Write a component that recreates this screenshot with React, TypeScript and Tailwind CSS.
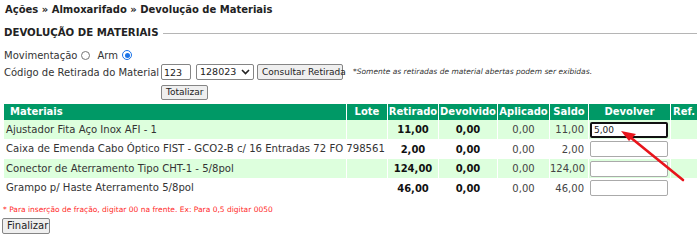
import type { FC } from "react";

type Row = {
  material: string;
  retirado: string;
  saldo: string;
  devolver: string;
  focused?: boolean;
};

const rows: Row[] = [
  { material: "Ajustador Fita Aço Inox AFI - 1", retirado: "11,00", saldo: "11,00", devolver: "5,00", focused: true },
  { material: "Caixa de Emenda Cabo Óptico FIST - GCO2-B c/ 16 Entradas 72 FO 798561", retirado: "2,00", saldo: "2,00", devolver: "" },
  { material: "Conector de Aterramento Tipo CHT-1 - 5/8pol", retirado: "124,00", saldo: "124,00", devolver: "" },
  { material: "Grampo p/ Haste Aterramento 5/8pol", retirado: "46,00", saldo: "46,00", devolver: "" },
];

const btn =
  "h-[15px] px-[4px] text-[9px] leading-none text-[#222] bg-[#efefef] border border-[#858585] rounded-[2px] whitespace-nowrap";

const Radio: FC<{ checked?: boolean }> = ({ checked }) =>
  checked ? (
    <span className="inline-flex w-[10px] h-[10px] rounded-full border-[1.5px] border-[#1a73e8] items-center justify-center">
      <span className="w-[5px] h-[5px] rounded-full bg-[#1a73e8]" />
    </span>
  ) : (
    <span className="inline-block w-[9px] h-[9px] rounded-full border border-[#767676] bg-white" />
  );

export default function App() {
  return (
    <div className="relative w-[700px] h-[243px] bg-white text-[#333] font-['DejaVu_Sans','Liberation_Sans',sans-serif] text-[10px] overflow-hidden">
      <div className="pl-[5px] h-[20px] leading-[20px] text-[10px] font-bold text-[#222] whitespace-nowrap">
        Ações » Almoxarifado » Devolução de Materiais
      </div>

      <div className="flex items-center pl-[4px] pr-[3px] mt-[6px] h-[14px]">
        <span className="text-[10.2px] font-bold text-[#222] whitespace-nowrap">DEVOLUÇÃO DE MATERIAIS</span>
        <span className="flex-1 ml-[4px] h-px bg-[#b5b5b5]" />
      </div>

      <div className="flex items-center pl-[4px] mt-[7px] h-[16px]">
        <span>Movimentação</span>
        <span className="ml-[4px] flex"><Radio /></span>
        <span className="ml-[7px]">Arm</span>
        <span className="ml-[4px] flex"><Radio checked /></span>
      </div>

      <div className="flex items-center pl-[4px] mt-[1px] h-[16px]">
        <span className="w-[157px] whitespace-nowrap">Código de Retirada do Material</span>
        <input
          defaultValue="123"
          className="w-[30px] h-[16px] px-[2px] text-[9.5px] text-[#222] border border-[#858585] rounded-[2px] outline-none"
        />
        <span className="ml-[5px] w-[58px] h-[16px] px-[3px] flex items-center justify-between border border-[#858585] rounded-[2px] text-[9.5px] text-[#222]">
          128023
          <svg width="9" height="6" viewBox="0 0 9 6">
            <path d="M1 1l3.5 3.5L8 1" stroke="#222" strokeWidth="1.6" fill="none" />
          </svg>
        </span>
        <button className={`${btn} ml-[3px] w-[86px] h-[16px]`}>Consultar Retirada</button>
        <span className="ml-[10px] text-[7.5px] italic text-[#333] whitespace-nowrap">
          *Somente as retiradas de material abertas podem ser exibidas.
        </span>
      </div>

      <div className="pl-[161px] mt-[5px] flex">
        <button className={`${btn} w-[47px]`}>Totalizar</button>
      </div>

      <table className="ml-[3px] mt-[4px] w-[695px] table-fixed border-separate border-spacing-x-[1px] border-spacing-y-0">
        <colgroup>
          <col className="w-[342px]" />
          <col className="w-[40px]" />
          <col className="w-[50px]" />
          <col className="w-[58px]" />
          <col className="w-[51px]" />
          <col className="w-[38px]" />
          <col className="w-[81px]" />
          <col className="w-[26px]" />
        </colgroup>
        <thead>
          <tr className="bg-[#009966] text-white font-bold text-[10px] h-[16px] leading-none">
            <th className="text-left pl-[6px] p-0">Materiais</th>
            <th className="p-0 whitespace-nowrap">Lote</th>
            <th className="p-0 whitespace-nowrap">Retirado</th>
            <th className="p-0 whitespace-nowrap">Devolvido</th>
            <th className="p-0 whitespace-nowrap">Aplicado</th>
            <th className="p-0 whitespace-nowrap">Saldo</th>
            <th className="p-0 whitespace-nowrap">Devolver</th>
            <th className="text-left pl-[2px] whitespace-nowrap">Ref.</th>
          </tr>
        </thead>
        <tbody>
          {rows.map((r, i) => (
            <tr key={r.material} className={`${i % 2 === 0 ? "h-[19px] bg-[#ddffdd]" : "h-[20px] bg-white"}`}>
              <td className="pl-[2px] text-[10.1px] whitespace-nowrap overflow-visible">{r.material}</td>
              <td />
              <td className="text-center font-bold text-[#111]">{r.retirado}</td>
              <td className="text-center font-bold text-[#111]">0,00</td>
              <td className="text-center text-[#444]">0,00</td>
              <td className="text-right pr-[4px] text-[#444]">{r.saldo}</td>
              <td className="pl-[1px]">
                <input
                  defaultValue={r.devolver}
                  className={`block w-[78px] h-[16px] px-[2px] text-[9px] text-[#222] bg-white rounded-[2px] outline-none ${
                    r.focused ? "border-2 border-[#111]" : "border border-[#aaa]"
                  }`}
                />
              </td>
              <td />
            </tr>
          ))}
        </tbody>
      </table>

      <div className="pl-[3px] mt-[6px] text-[7.5px] text-[#ff2a2a] leading-[12px] whitespace-nowrap">
        * Para inserção de fração, digitar 00 na frente. Ex: Para 0,5 digitar 0050
      </div>
      <div className="pl-[2px] mt-[2px] flex">
        <button className={`${btn} w-[48px] h-[16px] text-[10px]`}>Finalizar</button>
      </div>

      <svg className="absolute left-0 top-0 pointer-events-none" width="700" height="243">
        <line x1="683" y1="180" x2="630" y2="137" stroke="#e8141b" strokeWidth="2.6" strokeLinecap="round" />
        <polygon points="621,131 636,134 629,141" fill="#e8141b" />
      </svg>
    </div>
  );
}
